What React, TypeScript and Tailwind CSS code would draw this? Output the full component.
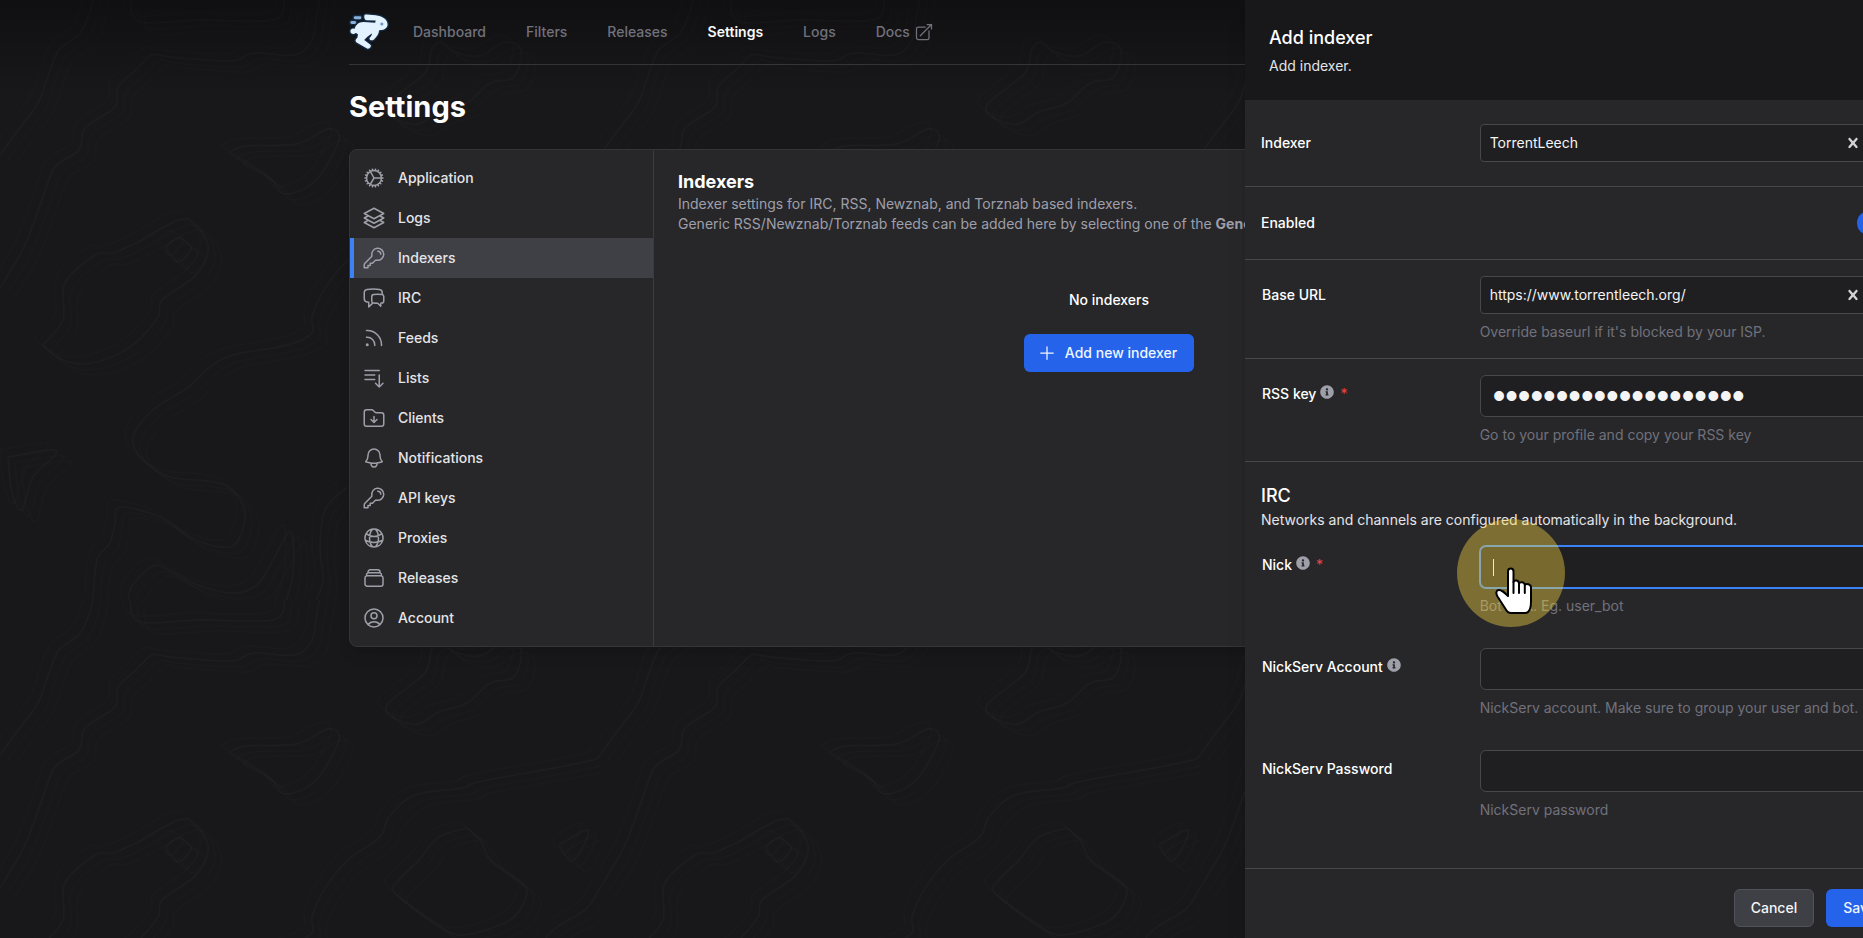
import { useState } from 'react'
import type { ReactNode } from 'react'
import type { IconType } from 'react-icons'
import {
  HiOutlineArrowTopRightOnSquare, HiOutlineBarsArrowDown, HiOutlineBell, HiOutlineChatBubbleLeftRight,
  HiOutlineCog, HiOutlineFolderArrowDown, HiOutlineGlobeAlt, HiOutlineKey, HiOutlinePlus,
  HiOutlineRectangleStack, HiOutlineRss, HiOutlineSquare3Stack3D, HiOutlineUserCircle,
} from 'react-icons/hi2'
import { FaInfoCircle } from 'react-icons/fa'
import clsx from 'clsx'

type Point = [number, number]

const NAV_ROUTES = ['Dashboard', 'Filters', 'Releases', 'Settings', 'Logs']

const SETTINGS_ROUTES: { name: string; icon: IconType }[] = [
  { name: 'Application', icon: HiOutlineCog },
  { name: 'Logs', icon: HiOutlineSquare3Stack3D },
  { name: 'Indexers', icon: HiOutlineKey },
  { name: 'IRC', icon: HiOutlineChatBubbleLeftRight },
  { name: 'Feeds', icon: HiOutlineRss },
  { name: 'Lists', icon: HiOutlineBarsArrowDown },
  { name: 'Clients', icon: HiOutlineFolderArrowDown },
  { name: 'Notifications', icon: HiOutlineBell },
  { name: 'API keys', icon: HiOutlineKey },
  { name: 'Proxies', icon: HiOutlineGlobeAlt },
  { name: 'Releases', icon: HiOutlineRectangleStack },
  { name: 'Account', icon: HiOutlineUserCircle },
]

// contour lines of one 600x600 tile
const CONTOURS: Point[][] = [
  [[97, -40], [93, 0], [81, 32], [59, 50], [49, 73], [38, 103], [18, 130], [0, 155]],
  [[323, -20], [316, 20], [312, 40], [295, 55], [253, 53], [231, 61], [170, 57], [152, 55], [134, 72], [118, 87], [115, 107], [85, 128], [79, 150], [55, 167], [42, 200], [24, 247], [0, 288]],
  [[130, 0], [140, 22], [200, 20], [273, 20], [285, 0]],
  [[431, 50], [425, 73], [395, 97], [386, 110], [400, 121], [419, 124], [439, 112], [467, 103], [490, 83], [514, 77], [521, 50], [505, 42], [480, 56], [455, 52], [440, 42], [431, 50]],
  [[229, 153], [245, 146], [297, 144], [328, 129], [339, 140], [316, 180], [285, 194], [269, 177], [229, 153]],
  [[600, 155], [593, 160], [554, 168], [478, 182], [463, 188], [415, 195], [389, 217], [380, 237], [348, 260], [324, 290], [312, 317], [312, 333], [287, 345], [233, 355], [210, 367], [187, 388], [153, 410], [133, 438], [143, 460], [170, 477], [207, 481], [230, 488], [245, 512], [237, 542], [220, 547], [190, 537], [160, 517], [120, 507], [115, 523], [110, 543], [97, 560], [93, 600]],
  [[467, 228], [480, 240], [492, 262], [522, 283], [526, 297], [510, 320], [463, 335], [435, 323], [395, 293], [399, 280], [419, 260], [439, 237], [467, 228]],
  [[559, 245], [587, 230], [583, 247], [571, 261], [559, 245]],
  [[43, 345], [63, 320], [65, 283], [95, 255], [113, 253], [138, 242], [182, 219], [202, 233], [208, 253], [194, 277], [162, 300], [158, 317], [133, 345], [100, 361], [72, 363], [50, 352], [43, 345]],
  [[165, 248], [178, 238], [191, 248], [178, 262], [165, 248]],
  [[600, 288], [585, 310], [550, 333], [520, 380], [470, 400]],
  [[130, 617], [130, 590], [153, 566], [173, 572], [197, 585], [233, 593], [257, 585], [273, 560], [288, 533], [293, 540], [292, 580], [280, 617]],
  [[347, 487], [325, 510], [320, 547], [323, 580], [316, 600]],
  [[8, 457], [50, 450], [55, 455], [33, 477], [22, 510], [12, 493], [8, 457]],
]

function smoothPath(points: Point[]) {
  let d = `M${points[0][0]} ${points[0][1]}`
  for (let i = 0; i < points.length - 1; i++) {
    const a = points[i - 1] ?? points[i]
    const b = points[i]
    const c = points[i + 1]
    const e = points[i + 2] ?? c
    d += `C${b[0] + (c[0] - a[0]) / 6} ${b[1] + (c[1] - a[1]) / 6} ${c[0] - (e[0] - b[0]) / 6} ${c[1] - (e[1] - b[1]) / 6} ${c[0]} ${c[1]}`
  }
  return d
}

function TopographyBackground() {
  return (
    <svg className="absolute inset-0 h-full w-full" aria-hidden="true">
      <defs>
        <pattern id="topography" width="600" height="600" patternUnits="userSpaceOnUse">
          <g fill="none" stroke="#ffffff">
            {CONTOURS.map((points, i) => (
              <g key={i}>
                <path d={smoothPath(points)} strokeOpacity="0.022" strokeWidth="1.3" />
                <path d={smoothPath(points)} strokeOpacity="0.008" transform="translate(7 6)" />
                <path d={smoothPath(points)} strokeOpacity="0.008" transform="translate(14 11)" />
                <path d={smoothPath(points)} strokeOpacity="0.008" transform="translate(-8 -7)" />
              </g>
            ))}
          </g>
        </pattern>
      </defs>
      <rect width="100%" height="100%" fill="url(#topography)" />
    </svg>
  )
}

function Logo() {
  return (
    <svg viewBox="0 0 42 42" className="h-10 w-10" aria-hidden="true">
      <g stroke="#12283f" strokeWidth="3" strokeLinejoin="round" fill="#e3f2ff" paintOrder="stroke">
        <path d="M16 4.500C16 3 17 2.600 18.500 2.600L28 3.500C35 4.200 40.500 8 40.500 13C40.500 16.800 37 18.500 33 19L31.500 19.500C31.500 23 29 26 26.500 28.500C24.500 30.500 21.500 30 21.500 27.800C21.500 26.500 24.500 25 24 22.500C21 24.500 18 26.500 16 29.500L22.500 34.500C24 36 21.500 39.500 19 38.400L8 32C6 30.500 6.800 28.500 8.800 27L9.500 23.500C8 22.500 7.500 22 7 22C5 24 1.500 23 1.500 20.200C1.500 17.800 4 16.800 6 17.800C7 13 10.500 10.800 15 10.600L27.500 11.200L28 9L18.500 8.600C17 8.500 16 7.500 16 4.500Z" />
        <rect x="5" y="4.500" width="8" height="3" rx="1.500" fill="#8db0da" />
        <rect x="1.500" y="9.500" width="6" height="3" rx="1.500" fill="#8db0da" />
      </g>
      <circle cx="34.500" cy="12.500" r="1.600" fill="#6d93c4" />
    </svg>
  )
}

function PointerHand() {
  return (
    <svg viewBox="0 0 38 48" className="absolute left-[38px] top-[48px] h-12 w-[38px]" fill="#fff" stroke="#000" strokeWidth="2" strokeLinejoin="round" strokeLinecap="round">
      <path d="M13 4.500C13 .5 18.500 .5 18.500 4.500V15C19.500 12.500 24 13 24 16.500C25 14.500 29.500 14.800 29.800 18C31 16.200 36 17 36 20.500V35C36 40 35 43 33 45Q32 46 30 46H16Q13 46 11.500 43.500L2.500 29.500C.8 26.500 .8 23.500 3.500 23C6.500 22.500 9 25 13 29Z" />
      <path d="M18.500 15V26M24 16.500V26M29.800 18V26" fill="none" />
    </svg>
  )
}

function Hint({ children }: { children: ReactNode }) {
  return <p className="mt-2 text-sm text-zinc-500">{children}</p>
}

interface FieldProps {
  id: string
  label: string
  tip?: boolean
  required?: boolean
  children: ReactNode
}

function Field({ id, label, tip, required, children }: FieldProps) {
  return (
    <div className="grid grid-cols-3 gap-4 p-4">
      <div className="mt-[9px] flex h-5 items-center pl-px">
        <label htmlFor={id} className="text-sm font-medium text-white">{label}</label>
        {tip && <FaInfoCircle className="mb-1 ml-1 size-3.5 text-zinc-400" />}
        {required && <span className="ml-1.5 text-sm text-[#ef4444]">*</span>}
      </div>
      <div className="col-span-2">{children}</div>
    </div>
  )
}

function SelectBox({ id, value }: { id: string; value: string }) {
  return (
    <div className="relative">
      <select
        id={id}
        className="block h-[38px] w-full appearance-none rounded-sm border border-[#47474c] bg-[#1f1f21] pl-[9px] text-sm text-zinc-100"
      >
        <option>{value}</option>
      </select>
      <button type="button" aria-label="Clear" className="absolute inset-y-0 right-[38px] flex items-center text-zinc-300">
        <svg viewBox="0 0 20 20" className="size-5" fill="currentColor">
          <path d="M14.348 14.849c-0.469 0.469-1.229 0.469-1.697 0l-2.651-3.030-2.651 3.029c-0.469 0.469-1.229 0.469-1.697 0-0.469-0.469-0.469-1.229 0-1.697l2.758-3.150-2.759-3.152c-0.469-0.469-0.469-1.228 0-1.697s1.228-0.469 1.697 0l2.652 3.031 2.651-3.031c0.469-0.469 1.228-0.469 1.697 0s0.469 1.229 0 1.697l-2.758 3.152 2.758 3.150c0.469 0.469 0.469 1.229 0 1.698z" />
        </svg>
      </button>
    </div>
  )
}

const inputClass = 'block h-[42px] w-full rounded-md border bg-[#1f1f21] px-3 text-zinc-100 outline-none'

function AddIndexerPanel() {
  const [rssKey, setRssKey] = useState('a1b2c3d4e5f6a7b8c9d0')
  const [enabled, setEnabled] = useState(true)

  return (
    <form className="absolute top-0 -right-[54px] flex min-h-full w-full max-w-2xl flex-col bg-[#27272a] shadow-xl">
      <div className="space-y-1 bg-[#18181b] p-6">
        <h2 className="text-lg leading-7 font-medium text-white">Add indexer</h2>
        <p className="text-sm text-zinc-200">Add indexer.</p>
      </div>

      <div className="flex-1 divide-y divide-[#47474c]">
        <div className="grid grid-cols-3 items-center gap-4 px-4 py-6">
          <label htmlFor="indexer" className="text-sm font-medium text-white">Indexer</label>
          <div className="col-span-2"><SelectBox id="indexer" value="TorrentLeech" /></div>
        </div>
        <div className="flex items-center justify-between px-4 py-6">
          <span id="enabled-label" className="text-sm font-medium text-white">Enabled</span>
          <button
            type="button"
            role="switch"
            aria-checked={enabled}
            aria-labelledby="enabled-label"
            onClick={() => setEnabled(!enabled)}
            className={clsx('flex h-6 w-11 items-center rounded-full border-2 border-transparent', enabled ? 'justify-end bg-[#2563eb]' : 'bg-zinc-600')}
          >
            <span className="size-5 rounded-full bg-white" />
          </button>
        </div>
        <Field id="baseurl" label="Base URL">
          <SelectBox id="baseurl" value="https://www.torrentleech.org/" />
          <Hint>Override baseurl if it's blocked by your ISP.</Hint>
        </Field>
        <Field id="rsskey" label="RSS key" tip required>
          <input
            id="rsskey"
            type="password"
            value={rssKey}
            onChange={(e) => setRssKey(e.target.value)}
            className={clsx(inputClass, "border-[#47474c] font-['Liberation_Sans',sans-serif] text-[36px]")}
          />
          <Hint>Go to your profile and copy your RSS key</Hint>
        </Field>
        <div>
          <div className="px-4 pt-5">
            <h3 className="text-lg leading-7 font-medium text-white">IRC</h3>
            <p className="text-sm text-zinc-200">Networks and channels are configured automatically in the background.</p>
          </div>
          <Field id="nick" label="Nick" tip required>
            <div className="relative">
              <input id="nick" type="text" className={clsx(inputClass, 'border-[#3b82f6] ring-1 ring-[#3b82f6]')} />
              <span className="absolute top-[13px] left-[13px] h-[17px] w-px bg-zinc-100" />
              <div className="pointer-events-none absolute -top-[27px] -left-[23px] z-10 size-[108px]">
                <div className="size-full rounded-full bg-[#ffdd43]/40" />
                <PointerHand />
              </div>
            </div>
            <Hint>Bot nick. Eg. user_bot</Hint>
          </Field>
          <Field id="account" label="NickServ Account" tip>
            <input id="account" type="text" className={clsx(inputClass, 'border-[#47474c]')} />
            <Hint>NickServ account. Make sure to group your user and bot.</Hint>
          </Field>
          <Field id="password" label="NickServ Password">
            <input id="password" type="password" className={clsx(inputClass, 'border-[#47474c]')} />
            <Hint>NickServ password</Hint>
          </Field>
        </div>
      </div>

      <div className="mt-8 flex justify-end gap-3 border-t border-[#47474c] px-6 py-5">
        <button type="button" className="h-[38px] rounded-md border border-zinc-600 bg-[#3f3f46] px-4 text-sm font-medium text-zinc-100">Cancel</button>
        <button type="submit" className="h-[38px] rounded-md border border-transparent bg-[#2563eb] px-4 text-sm font-medium text-blue-50">Save</button>
      </div>
    </form>
  )
}

export default function App() {
  return (
    <div className="relative h-screen overflow-hidden bg-[#18181b] font-['Inter',sans-serif]">
      <TopographyBackground />
      <div className="absolute inset-x-0 top-0 h-24 bg-linear-to-b from-black/35 to-transparent" />

      <div className="relative -mr-[51px]">
        <div className="mx-auto max-w-7xl px-8">
          <nav className="flex h-[65px] items-center gap-3 border-b border-[#353538]">
            <Logo />
            <div className="flex items-center gap-4">
              {NAV_ROUTES.map((name) => (
                <a
                  key={name}
                  href="#"
                  className={clsx('px-3 py-2 text-sm', name === 'Settings' ? 'font-semibold text-zinc-50' : 'font-medium text-zinc-500')}
                >
                  {name}
                </a>
              ))}
              <a href="#" className="flex items-center px-3 py-2 text-sm font-medium text-zinc-500">
                Docs
                <HiOutlineArrowTopRightOnSquare className="ml-1 size-5" />
              </a>
            </div>
          </nav>

          <h1 className="py-6 text-[29px] leading-9 font-bold text-white">Settings</h1>

          <main className="flex rounded-lg border border-[#353538] bg-[#27272a] shadow-lg">
            <aside className="w-[304px] shrink-0 border-r border-[#3b3b3f] py-2">
              {SETTINGS_ROUTES.map(({ name, icon: Icon }) => (
                <a
                  key={name}
                  href="#"
                  className={clsx(
                    'flex h-10 items-center border-l-4 px-2 text-sm font-medium text-zinc-200',
                    name === 'Indexers' ? 'border-[#3b82f6] bg-[#3f3f46]' : 'border-transparent',
                  )}
                >
                  <Icon className="mr-3 size-6 text-zinc-400" />
                  {name}
                </a>
              ))}
            </aside>

            <section className="flex-1 p-6">
              <h2 className="text-lg leading-4 font-bold text-white">Indexers</h2>
              <p className="mt-1 text-sm text-zinc-400">
                Indexer settings for IRC, RSS, Newznab, and Torznab based indexers.
                <br />
                Generic RSS/Newznab/Torznab feeds can be added here by selecting one of the <b>Generic</b>
              </p>
              <div className="mt-14 flex flex-col items-center">
                <p className="text-sm font-medium text-white">No indexers</p>
                <button
                  type="button"
                  className="mt-6 flex h-[38px] items-center rounded-md border border-transparent bg-[#2563eb] px-4 text-sm font-medium text-blue-50"
                >
                  <HiOutlinePlus className="mr-2 -ml-1 size-5" />
                  Add new indexer
                </button>
              </div>
            </section>
          </main>
        </div>
      </div>

      <AddIndexerPanel />
    </div>
  )
}
